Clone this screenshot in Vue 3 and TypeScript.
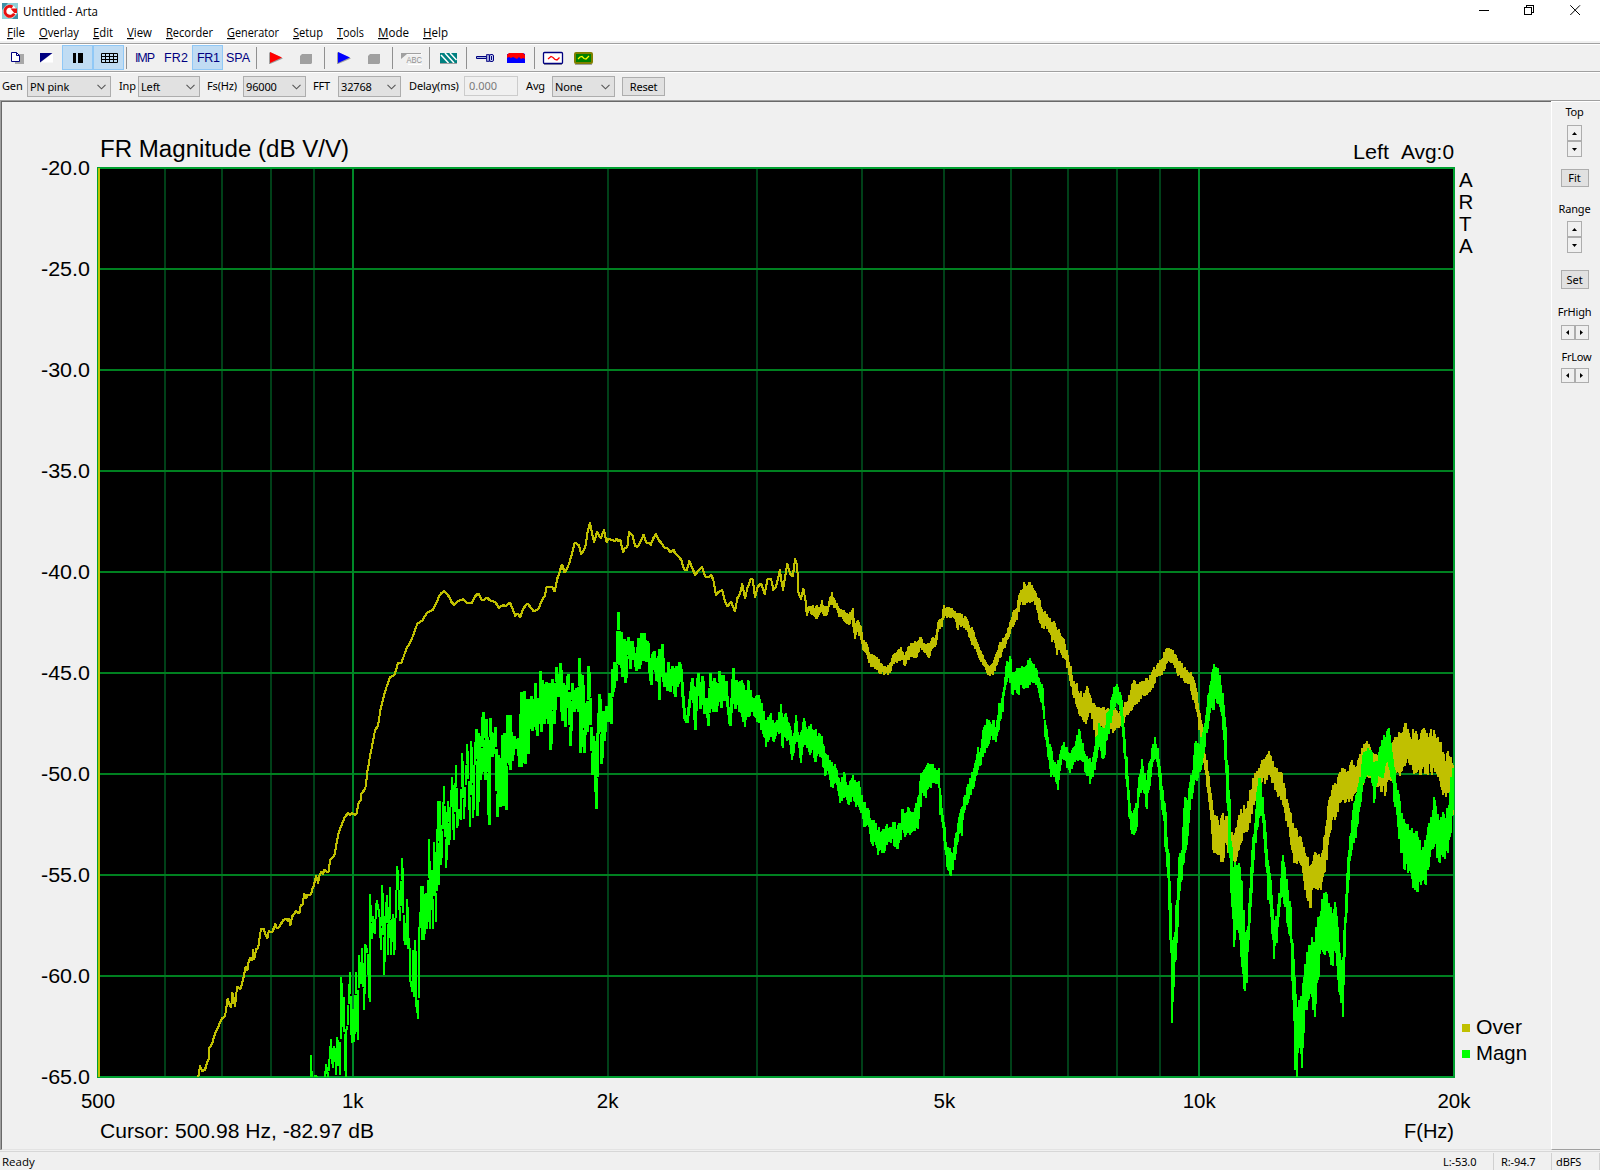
<script setup lang="ts">
type Knot = [number, number, number]
interface Line { ox: number; oy: number; sy: number; w?: number; pts: string }
interface Band { ox: number; oy: number; knots: string }

const menus = [
  { k: 'F', t: 'ile', w: 32, l: 18 }, { k: 'O', t: 'verlay', w: 54, l: 40 }, { k: 'E', t: 'dit', w: 34, l: 20 },
  { k: 'V', t: 'iew', w: 39, l: 25 }, { k: 'R', t: 'ecorder', w: 61, l: 47 }, { k: 'G', t: 'enerator', w: 66, l: 52 },
  { k: 'S', t: 'etup', w: 44, l: 30 }, { k: 'T', t: 'ools', w: 41, l: 27 }, { k: 'M', t: 'ode', w: 45, l: 31 },
  { k: 'H', t: 'elp', w: 30, l: 25 }
]

const toX = (f: number) => 98 + (1356 * Math.log(f / 500)) / Math.log(40)
const minor = [600, 700, 800, 900, 2000, 3000, 4000, 5000, 6000, 7000, 8000, 9000].map(f => Math.round(toX(f)))
const major = [1000, 10000].map(f => Math.round(toX(f)))
const levels = Array.from({ length: 10 }, (_, i) => ({ y: 167 + i * 101, label: (-20 - i * 5).toFixed(1) }))
const ticks = [
  { f: 500, t: '500' }, { f: 1000, t: '1k' }, { f: 2000, t: '2k' },
  { f: 5000, t: '5k' }, { f: 10000, t: '10k' }, { f: 20000, t: '20k' }
]

// Samples are stored in thirds of a pixel relative to each segment's origin.
const overLines: Line[] = [
  { ox: 180, oy: 560, sy: 2.958, pts: '55,1529 60,1497 66,1512 75,1508 81,1485 87,1475 88,1443 96,1432 105,1400 117,1375 126,1355 135,1350 143,1297 150,1320 154,1322 156,1280 160,1290 165,1320 171,1262 181,1270 190,1238 197,1203 202,1215 206,1188 212,1176 217,1183 219,1152 223,1180 228,1152 234,1148 243,1090 250,1090 256,1108 262,1120 266,1098 277,1101 286,1077 290,1090 297,1085 310,1065 318,1060 324,1070 328,1062 331,1080 336,1055 348,1038 358,1046 362,1020 368,1018 372,988 378,1002 382,990 392,990 402,960 408,934 414,955 418,935 424,922 429,930 433,915 440,922 446,922 450,888 463,875 474,815 482,790 495,760 504,748 510,755 516,748 522,753 529,753 536,718 543,710 544,692 556,675 563,620 573,565 585,503 594,490 602,440 615,390 630,345 642,342 654,305 664,303 680,262 695,235 712,188 726,180 740,157 758,148 768,130 778,105 791,92' },
  { ox: 440, oy: 510, sy: 3, pts: '3,250 12,243 24,255 34,275 42,285 55,272 70,267 80,278 95,280 104,260 115,250 125,270 134,268 141,262 150,272 165,275 176,293 190,285 196,290 210,278 218,298 226,318 234,310 240,322 250,295 262,280 270,290 280,303 294,298 306,270 314,258 320,230 336,230 344,245 352,205 358,188 366,163 374,188 384,170 395,135 404,98 416,105 424,132 436,110 443,65 450,38 455,65 462,97 471,66 482,84 492,60 500,98 505,85 517,90 524,95 530,85 535,95 541,90 549,127 555,112 562,112 567,66 577,75 585,108 593,110 603,92 611,74 619,98 626,97 632,105 640,85 648,72 656,90 663,98 675,115 680,112 692,128 700,118 705,130 716,140 724,150 732,178 741,180 748,153 756,172 765,195 775,182 786,171 795,200 805,202 814,195 820,210 828,255 836,245 846,240 855,275 862,290 873,275 885,305 892,265 900,250' },
  { ox: 720, oy: 540, sy: 3, pts: '60,162 67,132 75,176 82,145 93,115 98,118 105,172 113,140 124,130 134,162 143,115 153,115 160,150 168,140 173,120 179,90 189,150 196,105 202,72 210,100 217,110 221,90 225,57 232,80 234,155 243,178 250,146 258,190' }
]
const overBands: Band[] = [
  { ox: 720, oy: 540, knots: '258,190,215 262,205,228 268,197,212 276,197,225 288,198,237 298,200,225 305,180,215 312,200,228 322,200,225 330,172,195 336,155,190 342,175,205 350,190,210 358,205,230 370,210,238 378,220,250 388,222,255 396,210,235 400,203,262 406,250,297 414,240,275 422,258,300 430,300,330 440,312,345 448,335,370 456,343,382 470,352,390 484,368,403 496,378,402 510,370,400 520,345,370 532,335,368 543,320,355 555,345,378 565,320,360 580,308,352 592,305,350 601,290,325 615,315,340 628,310,354 640,292,325 648,285,315 655,245,275 665,235,260 672,194,235 680,202,235 688,200,230 696,205,232 704,213,238 713,218,270 725,222,258 738,232,270 748,255,290 756,260,315 768,298,325 778,320,355 790,345,375 800,372,400 810,380,408 820,370,405 830,335,375 840,305,355 855,290,325 866,262,290 880,215,260 890,205,240 897,165,215' },
  { ox: 980, oy: 560, knots: '116,110,145 121,100,135 132,66,128 140,78,128 147,66,125 156,75,125 164,92,135 172,112,150 180,120,188 190,155,205 200,162,208 208,175,215 216,185,245 226,190,250 232,215,285 238,208,270 250,235,295 262,270,325 272,318,378 280,365,405 290,370,440 300,400,468 312,400,485 320,378,480 330,405,460 342,430,510 350,440,525 358,440,510 372,440,500 385,445,510 398,450,518 406,445,510 416,460,505 428,440,505 436,425,470 448,405,458 458,370,440 465,362,435 476,375,425 488,365,405 500,355,405 510,345,395 518,330,385 530,315,350 545,298,345 560,265,310 570,268,305 580,270,308 590,295,340 605,310,355 615,320,370 630,338,372 640,350,420 650,395,455 658,450,510 664,480,550 672,560,610 680,600,680 690,680,750 698,750,870 706,765,880 715,780,885 728,760,905 738,768,850 745,775,880 755,815,900 765,820,910 775,785,870' },
  { ox: 1200, oy: 640, knots: '104,590,670 112,560,650 122,508,610 132,495,580 142,505,575 150,450,550 160,415,490 168,405,475 178,385,450 186,360,425 196,360,433 207,332,405 216,362,430 226,380,450 236,395,468 245,400,475 255,445,520 264,490,560 272,520,615 282,570,668 292,570,672 302,590,675 312,620,722 320,655,775 332,675,805 342,645,745 352,645,742 362,650,750 372,590,700 380,540,660 388,480,590 398,435,530 408,432,530 420,395,490 430,385,480 440,405,478 454,365,475 464,380,460 475,360,450 486,325,430 500,302,410 510,320,405 520,340,410 530,345,440 545,360,455 558,340,455 570,330,420 580,305,400 592,290,395 602,278,395 610,275,380 618,250,370 628,278,370 640,268,390 652,282,395 664,280,405 676,270,402 684,290,405 692,268,395 704,282,395 714,290,410 722,305,440 730,335,465 740,340,460 750,350,455 757,370,470 760,375,525' }
]
const magnLines: Line[] = [
  { ox: 180, oy: 560, sy: 2.958, pts: '392,1529 393,1466 395,1529' },
  { ox: 180, oy: 560, sy: 2.958, pts: '405,1526 412,1529' },
  { ox: 180, oy: 560, sy: 2.958, pts: '435,1529 438,1493 444,1529 453,1418 458,1500 463,1440 469,1520 471,1413 475,1440 480,1522 484,1236 489,1380 491,1296 497,1529 497,1390 502,1388 510,1222 515,1428 519,1330 523,1425 528,1222 533,1418 537,1170 543,1252 546,1150 553,1328 555,1138 562,1155 569,1306 570,990 577,1118 579,1055 584,1105 590,1008 598,1045 603,1152 607,964 613,1226 615,1070 621,992 624,1166 630,970 633,1166 638,1050 643,1166 647,1040 652,907 660,1065 667,885 672,1120 677,1138 682,1005 685,1150 688,1120 690,1240 697,1275 700,1155 702,1290 706,1126 709,1318 715,1355 717,1105 721,1055 724,965 726,1122 730,965 733,1122 738,988 742,1090 748,828 750,1088 755,920 759,1088 763,835 768,1070 772,820 774,716 777,960 780,716 784,900 792,670 799,908 803,716 808,842 812,712 817,645 821,826 828,607 832,790 836,740 842,768 847,573 852,765 862,546 870,788 874,537 880,762 883,618 888,502 892,755' },
  { ox: 440, oy: 510, sy: 3, w: 3, pts: '108,660 112,915 115,670 121,808 128,607 134,808 138,630 142,770 146,943 149,625 156,740 160,712 165,652 171,920 175,738 181,888 186,677 190,885 192,672 197,898 202,617 206,740 210,778 209,617 216,750 222,680 228,715 233,685 237,770 243,548 244,770 249,655 252,544 254,760 258,570 264,730 267,570 270,655 273,560 276,660 279,570 282,650 285,522 290,676 294,566 297,640 300,485 303,665 307,513 313,640 318,517 325,640 328,520 331,718 337,510 342,640 348,473 354,560 361,460 365,632 370,522 374,650 380,510 384,494 390,706 396,520 403,605 408,535 413,605 418,446 421,727 427,497 432,728 436,580 440,665 445,470 450,605 457,792 460,680 465,800 468,895 471,700 474,640 478,553 484,760 488,605 492,690 498,590 504,635 508,550 512,640 517,480 520,545 523,458 528,510 534,307 538,462 542,368 545,500 552,390 556,517 561,400 565,382 570,475 575,395 582,440 588,480 594,385 598,475 603,370 608,450 612,370 618,455 622,395 628,485 633,522 636,435 642,425 648,510 653,440 657,568 657,420 662,500 666,405 671,530 677,490 680,540 684,457 690,543 697,470 704,558 707,470 712,530 717,458 722,480 727,555 733,625 740,637 747,580 752,540 756,505 760,570 765,658 768,545 774,492 781,595 787,500 793,610 798,565 804,645 810,492 818,605 823,507 828,605 838,485 842,592 848,498 852,570 857,515 860,570 869,645 875,555 879,475 884,595 889,512 897,600' }
]
const magnBands: Band[] = [
  { ox: 720, oy: 540, knots: '57,440,515 66,420,530 75,450,560 84,420,530 93,450,515 104,475,530 117,465,550 125,490,570 137,540,622 145,530,605 153,518,590 162,555,605 172,540,575 183,492,580 187,520,617 197,520,595 207,550,600 216,590,660 222,580,640 228,525,600 236,585,625 243,575,670 252,535,615 262,568,625 273,552,640 282,570,655 289,568,667 297,578,640 306,588,655 315,640,708 322,645,690 333,670,742 345,672,730 352,690,735 360,730,788 372,695,775 380,735,780 387,735,795 399,705,770 408,735,800 416,722,800 424,765,820 433,790,862 443,805,855 455,840,912 466,850,905 475,870,946 488,868,940 500,853,915 510,860,905 522,845,918 533,855,928 543,850,900 547,808,870 555,820,890 567,805,880 577,820,875 588,790,865 594,770,868 602,700,800 608,695,755 618,680,775 630,675,740 640,672,730 650,690,730 656,685,745 661,745,825 668,825,865 674,860,930 681,920,980 687,930,992 692,935,1008 698,940,990 706,895,960 713,850,905 720,820,880 726,800,888 732,770,820 742,740,795 752,715,765 762,685,740 773,622,690 782,625,675 790,570,650 800,538,625 810,545,600 819,540,600 828,560,607 838,490,570 848,455,515 855,410,450 860,362,425 866,370,410 871,348,430 878,395,465 886,395,450 897,385,465' },
  { ox: 980, oy: 560, knots: '118,335,390 125,318,375 137,318,385 150,295,375 160,315,370 170,330,370 178,355,400 188,385,450 196,480,530 204,530,590 212,560,650 220,600,645 228,615,665 234,600,690 242,570,615 252,545,600 262,560,625 270,580,640 280,565,615 290,525,600 300,512,600 308,550,605 318,590,640 330,595,672 340,590,650 348,530,605 358,490,560 366,500,595 374,505,585 382,460,540 392,420,490 402,380,450 411,373,430 420,395,450 426,420,500 432,500,580 440,590,680 448,690,770 455,760,822 462,750,825 470,730,800 478,650,710 486,598,690 492,640,700 500,660,748 508,610,690 516,565,620 526,530,590 534,565,620 542,640,720 550,690,765 556,730,860 562,830,920 566,880,1050 572,1030,1180 576,1140,1390 583,1130,1280 590,1020,1150 598,890,1020 606,870,960 614,710,880 622,720,855 630,665,750 638,630,700 645,550,660 655,550,655 664,530,630 672,500,580 680,440,520 690,375,460 702,312,450 712,330,430 720,345,440 728,400,510 736,470,600 742,600,730 748,690,880 755,860,1040 762,920,1160 770,915,1110 777,910,1118' },
  { ox: 1200, oy: 640, knots: '114,680,870 123,720,950 133,810,1048 140,870,1030 147,790,900 153,680,800 160,590,700 170,455,570 180,415,515 188,470,550 196,540,640 204,660,780 212,720,830 222,840,958 230,830,910 238,760,830 248,645,765 256,680,800 264,750,860 272,800,910 279,910,1080 286,1010,1290 291,1110,1310 297,1080,1200 305,1080,1285 312,1010,1180 320,935,1110 335,890,1070 345,905,1130 355,830,1020 368,785,935 377,755,930 387,790,940 393,800,975 408,800,940 415,860,1020 422,960,1090 429,950,1132 434,830,950 440,700,820 446,630,720 455,540,630 463,490,610 472,460,560 480,410,500 490,345,425 505,325,400 515,335,430 522,365,490 530,365,430 540,320,410 552,285,400 566,265,380 574,310,410 584,390,500 594,450,560 604,520,640 616,550,690 630,570,690 642,580,738 655,590,755 668,620,720 676,600,733 685,560,690 694,530,630 702,472,620 712,530,655 720,540,670 730,515,650 745,515,640 752,410,580 759,385,510' }
]

// Collapses a trace to one bar per screen column.
function linePath(l: Line): string {
  const w = l.w ?? 2
  const pts = l.pts.split(' ').map(p => {
    const [x, y] = p.split(',').map(Number)
    return [l.ox + x / 3, l.oy + y / l.sy]
  })
  const cols = new Map<number, [number, number]>()
  const add = (x: number, y: number) => {
    const c = Math.round(x)
    const r = cols.get(c)
    cols.set(c, r ? [Math.min(r[0], y), Math.max(r[1], y)] : [y, y])
  }
  for (let i = 1; i < pts.length; i++) {
    const [xa, ya] = pts[i - 1]
    const [xb, yb] = pts[i]
    for (let s = 0; s <= 24; s++) add(xa + ((xb - xa) * s) / 24, ya + ((yb - ya) * s) / 24)
  }
  let d = ''
  cols.forEach(([a, b], c) => {
    const y0 = Math.round(a - 0.7)
    const y1 = Math.min(1077, Math.max(y0 + 2, Math.round(b + 0.7)))
    d += `M${c - 1} ${y0}h${w}V${y1}h-${w}z`
  })
  return d
}

function bandPath(b: Band): string {
  const ks = b.knots.split(' ').map(k => k.split(',').map(Number) as Knot)
  const at = new Map(ks.map(k => [Math.round(k[0] / 3), k]))
  let seed = 7 + b.ox
  const rnd = () => ((seed = (seed * 16807) % 2147483647) / 2147483647)
  const first = Math.round(ks[0][0] / 3)
  const last = Math.round(ks[ks.length - 1][0] / 3)
  let d = ''
  let i = 0
  for (let c = first; c <= last; c++) {
    while (i < ks.length - 2 && ks[i + 1][0] < c * 3) i++
    const [x0, t0, b0] = ks[i]
    const [x1, t1, b1] = ks[i + 1]
    const u = Math.max(0, Math.min(1, (c * 3 - x0) / (x1 - x0)))
    let top = t0 + (t1 - t0) * u
    let bot = b0 + (b1 - b0) * u
    const peak = at.get(c)
    if (peak) {
      top = peak[1]
      bot = peak[2]
    } else {
      const h = bot - top
      top += (rnd() * 0.38 - 0.12) * h
      bot -= (rnd() * 0.38 - 0.12) * h
    }
    const y0 = Math.round(b.oy + top / 3)
    const y1 = Math.min(1077, Math.max(y0 + 2, Math.round(b.oy + bot / 3)))
    d += `M${b.ox + c - 1} ${y0}h2V${y1}h-2z`
  }
  return d
}

const overPath = overLines.map(linePath).join('') + overBands.map(bandPath).join('')
const magnPath = magnLines.map(linePath).join('') + magnBands.map(bandPath).join('')
</script>

<template>
  <div class="window">
    <header class="title">
      <svg class="logo" width="16" height="16" viewBox="0 0 16 16">
        <rect width="16" height="16" fill="#8fd0d8" />
        <path d="M0 0h6L0 7zM16 16h-6l6-6z" fill="#3f8fa5" />
        <circle cx="8" cy="8.4" r="6.6" fill="#fff" />
        <path d="M12.3 10.6A5 5 0 1 1 10.5 4" fill="none" stroke="#e81010" stroke-width="2.9" />
        <path d="M8.5 5.5h6.5v4.4h-2.8z" fill="#e81010" />
      </svg>
      <svg class="caption" width="400" height="22"><text x="0" y="16" textLength="75" lengthAdjust="spacingAndGlyphs">Untitled - Arta</text></svg>
      <svg class="controls" width="117" height="22" viewBox="1478 0 117 22" fill="none" stroke="#000">
        <path d="M1479 10.5h10M1524.5 7.5h7v7h-7zM1526.5 7.5v-2h7v7h-2" shape-rendering="crispEdges" />
        <path d="M1570.3 5.3l9.7 9.7M1580 5.3l-9.7 9.7" />
      </svg>
    </header>

    <nav class="menu">
      <svg v-for="m in menus" :key="m.k + m.t" :width="m.w" height="19">
        <text x="0" y="15" :textLength="m.l" lengthAdjust="spacingAndGlyphs"><tspan text-decoration="underline">{{ m.k }}</tspan>{{ m.t }}</text>
      </svg>
    </nav>

    <div class="tools">
      <button><svg viewBox="0 0 31 25"><path d="M15 9h9v10h-9z" fill="#a8a8a8" /><path d="M11.5 7.5h5l3 3v6h-8z" fill="#fff" stroke="#000080" /><path d="M16.5 7.5v3h3" fill="none" stroke="#000080" /></svg></button>
      <button><svg viewBox="0 0 31 25"><path d="M22 8v9.500H10z" fill="#fff" /><path d="M9 8h12.500L9 17.500z" fill="#000080" /></svg></button>
      <button class="on"><svg viewBox="0 0 31 25"><path d="M11 8h3v10h-3zM16 8h5v10h-5z" fill="#000" /></svg></button>
      <button class="on"><svg viewBox="0 0 31 25"><path d="M8.500 8.500h16v9h-16zM8.500 11.500h16M8.500 14.500h16M12.500 8.500v9M16.500 8.500v9M20.500 8.500v9" fill="none" stroke="#000" /></svg></button>
      <i />
      <button class="word"><svg viewBox="0 0 31 25"><text x="5" y="17" textLength="20">IMP</text></svg></button>
      <button class="word"><svg viewBox="0 0 31 25"><text x="3" y="17" textLength="24">FR2</text></svg></button>
      <button class="word on"><svg viewBox="0 0 31 25"><text x="5" y="17" textLength="23">FR1</text></svg></button>
      <button class="word"><svg viewBox="0 0 31 25"><text x="3" y="17" textLength="24">SPA</text></svg></button>
      <i />
      <button><svg viewBox="0 0 31 25"><path d="M9 8l1-1 13 6.500-13 5.500h-1z" fill="#a0a0a0" /><path d="M10 7l12 5.500-12 5.500z" fill="#f00" /></svg></button>
      <button><svg viewBox="0 0 31 25"><path d="M11 9h10v9l-1 1H9v-8z" fill="#a0a0a0" /></svg></button>
      <i />
      <button><svg viewBox="0 0 31 25"><path d="M9 8l1-1 13 6.500-13 5.500h-1z" fill="#a0a0a0" /><path d="M10 7l12 5.500-12 5.500z" fill="#00f" /></svg></button>
      <button><svg viewBox="0 0 31 25"><path d="M11 9h10v9l-1 1H9v-8z" fill="#a0a0a0" /></svg></button>
      <i />
      <button><svg viewBox="0 0 31 25"><path d="M6 9h20M12 19.500h14" stroke="#fff" /><path d="M5 8h20v1H11l-6 5z" fill="#a0a0a0" /><text x="10.500" y="18" class="abc" textLength="15.500" lengthAdjust="spacingAndGlyphs">ABC</text></svg></button>
      <i />
      <button><svg viewBox="0 0 31 25"><path d="M7 8h17v10H7z" fill="#008080" /><path d="M8 10l7.500 8M12 8l9 10M17 8l6.500 7" stroke="#fff" stroke-width="1.500" /><path d="M7 18.500h17" stroke="#a0a0a0" /></svg></button>
      <i />
      <button><svg viewBox="0 0 31 25"><path d="M6.500 11.500h10v2h-10z" fill="#a8b8e0" stroke="#000080" /><rect x="16.700" y="9.700" width="2.600" height="6.600" fill="#c8d0f0" stroke="#000080" /><rect x="19.500" y="9.500" width="4" height="7" rx="1.500" fill="#c8d0f0" stroke="#000080" /><path d="M21.500 11v4" stroke="#000080" /></svg></button>
      <button><svg viewBox="0 0 31 25"><path d="M7 9l2-1h13l2 1v9H6V9z" fill="#00f" /><path d="M8 8h14l2 2v4l-2-1-2 1-2-2-2 2-2-1-2-1-2 1-2-1-2 1v-3z" fill="#f00" /></svg></button>
      <i />
      <button><svg viewBox="0 0 31 25"><path d="M6 19.500h18" stroke="#a0a0a0" /><rect x="5.500" y="7.500" width="19" height="11" rx="1" fill="#fff" stroke="#000080" stroke-width="1.300" /><path d="M10 14l3-2.500 2 1 2 2 2 .5 2.500-2.500" fill="none" stroke="#f00" stroke-width="1.300" /></svg></button>
      <button><svg viewBox="0 0 31 25"><path d="M6 19.500h17" stroke="#a0a0a0" /><rect x="6" y="8" width="17" height="10" rx="1" fill="#008000" stroke="#808000" stroke-width="2" /><path d="M9 14l2-2 2-.5 2 2 2 .5 3-3" fill="none" stroke="#ff0" stroke-width="1.200" /></svg></button>
    </div>

    <div class="params">
      <span class="lab" style="width: 25px">Gen</span>
      <div class="combo" style="width: 84px"><span>PN pink</span><svg width="9" height="6"><path d="M.5.800l4 4 4-4" /></svg></div>
      <span class="lab" style="width: 19px; margin-left: 8px">Inp</span>
      <div class="combo" style="width: 62px"><span>Left</span><svg width="9" height="6"><path d="M.5.800l4 4 4-4" /></svg></div>
      <span class="lab" style="width: 36px; margin-left: 7px">Fs(Hz)</span>
      <div class="combo" style="width: 63px"><span>96000</span><svg width="9" height="6"><path d="M.5.800l4 4 4-4" /></svg></div>
      <span class="lab" style="width: 25px; margin-left: 7px">FFT</span>
      <div class="combo" style="width: 63px"><span>32768</span><svg width="9" height="6"><path d="M.5.800l4 4 4-4" /></svg></div>
      <span class="lab" style="width: 55px; margin-left: 8px">Delay(ms)</span>
      <div class="field">0.000</div>
      <span class="lab" style="width: 26px; margin-left: 8px">Avg</span>
      <div class="combo" style="width: 63px"><span>None</span><svg width="9" height="6"><path d="M.5.800l4 4 4-4" /></svg></div>
      <div class="reset">Reset</div>
    </div>

    <main class="body">
      <svg class="chart" width="1549" height="1047" viewBox="2 102 1549 1047">
        <rect x="97" y="167" width="1358" height="911" fill="#000" />
        <g shape-rendering="crispEdges">
          <rect v-for="x in minor" :key="x" :x="x - 1" y="168" width="2" height="909" fill="#004018" />
          <rect v-for="l in levels" :key="l.y" x="98" :y="l.y" width="1356" height="2" fill="#008020" />
          <rect v-for="x in major" :key="x" :x="x - 1" y="168" width="2" height="909" fill="#008828" />
          <path d="M97 167h1358v911H97zM99 169v907h1354V169z" fill="#00a030" fill-rule="evenodd" />
          <rect x="98" y="168" width="2" height="909" fill="#c0c000" />
          <path :d="overPath" fill="#c0c000" />
          <path :d="magnPath" fill="#0f0" />
          <rect x="1462" y="1024" width="8" height="8" fill="#c0c000" />
          <rect x="1462" y="1050" width="8" height="8" fill="#0f0" />
        </g>
        <g class="big">
          <text x="100" y="157" textLength="249" lengthAdjust="spacingAndGlyphs" font-size="23.500">FR Magnitude (dB V/V)</text>
          <text x="1353" y="159" textLength="36" lengthAdjust="spacingAndGlyphs">Left</text>
          <text x="1401" y="159" textLength="53" lengthAdjust="spacingAndGlyphs">Avg:0</text>
          <text v-for="l in levels" :key="l.label" x="41" :y="l.y + 7.500" textLength="49" lengthAdjust="spacingAndGlyphs">{{ l.label }}</text>
          <text v-for="t in ticks" :key="t.t" :x="toX(t.f)" y="1108" text-anchor="middle">{{ t.t }}</text>
          <text x="1459" y="187">A</text>
          <text x="1458.500" y="209">R</text>
          <text x="1459" y="231">T</text>
          <text x="1459" y="253">A</text>
          <text x="1476" y="1034" textLength="46" lengthAdjust="spacingAndGlyphs">Over</text>
          <text x="1476" y="1060" textLength="51" lengthAdjust="spacingAndGlyphs">Magn</text>
          <text x="100" y="1138" textLength="274" lengthAdjust="spacingAndGlyphs">Cursor: 500.98 Hz, -82.97 dB</text>
          <text x="1404" y="1138" textLength="50" lengthAdjust="spacingAndGlyphs">F(Hz)</text>
        </g>
      </svg>

      <aside class="side">
        <span class="cap top">Top</span>
        <div class="spin v"><b><svg viewBox="0 0 5 3"><path d="M0 3h5L2.500 0z" /></svg></b><b><svg viewBox="0 0 5 3"><path d="M0 0h5L2.500 3z" /></svg></b></div>
        <div class="btn fit">Fit</div>
        <span class="cap range">Range</span>
        <div class="spin v"><b><svg viewBox="0 0 5 3"><path d="M0 3h5L2.500 0z" /></svg></b><b><svg viewBox="0 0 5 3"><path d="M0 0h5L2.500 3z" /></svg></b></div>
        <div class="btn set">Set</div>
        <span class="cap high">FrHigh</span>
        <div class="spin h"><b><svg viewBox="0 0 3 5"><path d="M3 0v5L0 2.500z" /></svg></b><b><svg viewBox="0 0 3 5"><path d="M0 0v5l3-2.500z" /></svg></b></div>
        <span class="cap low">FrLow</span>
        <div class="spin h"><b><svg viewBox="0 0 3 5"><path d="M3 0v5L0 2.500z" /></svg></b><b><svg viewBox="0 0 3 5"><path d="M0 0v5l3-2.500z" /></svg></b></div>
      </aside>
    </main>

    <footer class="status">
      <span class="ready">Ready</span>
      <span class="cell l">L:-53.0</span>
      <span class="cell r">R:-94.7</span>
      <span class="cell d">dBFS</span>
    </footer>
  </div>
</template>

<style scoped>
.window {
  width: 1600px;
  height: 1170px;
  display: flex;
  flex-direction: column;
  background: #f0f0f0;
  color: #000;
  overflow: hidden;
  font: 11px "Noto Sans", "Open Sans", sans-serif;
}
.title {
  height: 22px;
  flex: none;
  display: flex;
  background: #fff;
}
.logo { margin: 3px 5px 0 2px; }
.caption text { font: 12px "Open Sans", sans-serif; }
.controls { margin: 0 5px 0 auto; }
.menu {
  height: 19px;
  flex: none;
  display: flex;
  padding-left: 7px;
  background: #fff;
}
.menu text { font: 12px "Open Sans", sans-serif; }
.tools {
  height: 25px;
  flex: none;
  display: flex;
  margin-top: 2px;
  padding-top: 1px;
  border-top: 1px solid #a0a0a0;
  box-shadow: inset 0 1px #fff;
}
.tools button {
  width: 31px;
  height: 25px;
  padding: 0;
  border: 0;
  background: none;
}
.tools button svg {
  display: block;
  width: 31px;
  height: 25px;
}
.tools .word text {
  font: 12.5px "Liberation Sans", Arial, sans-serif;
  fill: #000080;
}
.tools .on {
  background: #c0dcf3;
  box-shadow: inset 0 0 0 1px #90c8f6;
}
.tools i {
  width: 1px;
  margin: 2px 3px 1px 2px;
  background: #909090;
}
.abc { font: 8.5px "Liberation Sans", Arial, sans-serif; fill: #909090; }
.params {
  height: 29px;
  flex: none;
  display: flex;
  margin-top: 1px;
  padding: 4px 0 0 2px;
  box-sizing: border-box;
  border-top: 1px solid #a0a0a0;
  box-shadow: inset 0 1px #fff;
}
.lab {
  line-height: 20px;
  letter-spacing: -0.15px;
  white-space: nowrap;
}
.combo {
  height: 21px;
  box-sizing: border-box;
  display: flex;
  align-items: center;
  justify-content: space-between;
  padding: 0 4px 0 2px;
  border: 1px solid #adadad;
  background: #e1e1e1;
  letter-spacing: -0.15px;
}
.combo path { fill: none; stroke: #555; stroke-width: 1.1; }
.field {
  width: 54px;
  height: 20px;
  box-sizing: border-box;
  padding-left: 4px;
  border: 1px solid #ccc;
  line-height: 18px;
  color: #7a7a7a;
}
.reset {
  width: 43px;
  height: 19px;
  margin: 1px 0 0 7px;
  box-sizing: border-box;
  border: 1px solid #adadad;
  background: #e1e1e1;
  text-align: center;
  line-height: 18px;
  letter-spacing: -0.2px;
}
.body {
  height: 1050px;
  flex: none;
  display: flex;
  box-sizing: border-box;
  border-top: 1px solid #a0a0a0;
}
.chart {
  flex: none;
  border: 1px solid #e3e3e3;
  border-top-color: #696969;
  border-left-color: #696969;
  box-shadow: -1px 0 #a0a0a0;
  margin-left: 1px;
}
.big text {
  font-family: "Liberation Sans", Arial, sans-serif;
}
.big text:not([font-size]) { font-size: 20.5px; }
.side {
  flex: 1;
  display: flex;
  flex-direction: column;
  align-items: center;
  margin-left: -1px;
  padding-right: 3px;
  border-left: 1px solid #fff;
  border-bottom: 1px solid #a0a0a0;
  box-shadow: inset 0 1px #fff;
}
.cap { height: 14px; line-height: 14px; letter-spacing: -0.2px; }
.top { margin: 4px 0 6px; }
.range { margin: 15px 0 5px; }
.high { margin: 16px 0 6px; }
.low { margin: 10px 0 4px 4px; }
.spin { display: flex; }
.v { flex-direction: column; }
.spin b {
  box-sizing: border-box;
  display: flex;
  align-items: center;
  justify-content: center;
  border: 1px solid #adadad;
}
.v b { width: 15px; height: 16px; }
.h b { width: 14px; height: 15px; }
.v svg { width: 5px; height: 3px; }
.h svg { width: 3px; height: 5px; }
.btn {
  width: 28px;
  box-sizing: border-box;
  border: 1px solid #adadad;
  background: #e1e1e1;
  text-align: center;
}
.fit { height: 18px; margin-top: 12px; line-height: 16px; }
.set { height: 19px; margin-top: 17px; line-height: 18px; }
.status {
  flex: 1;
  display: flex;
  margin-top: 1px;
  border-top: 1px solid #d7d7d7;
}
.ready {
  flex: 1;
  padding-left: 2px;
  font: 11.5px/20px "Open Sans", sans-serif;
}
.cell {
  box-sizing: border-box;
  margin-top: 1px;
  line-height: 17px;
  border-right: 1px solid #d0d0d0;
  letter-spacing: -0.1px;
}
.l { width: 51px; }
.r { width: 58px; padding-left: 7px; }
.d { width: 48px; padding-left: 4px; }
</style>
